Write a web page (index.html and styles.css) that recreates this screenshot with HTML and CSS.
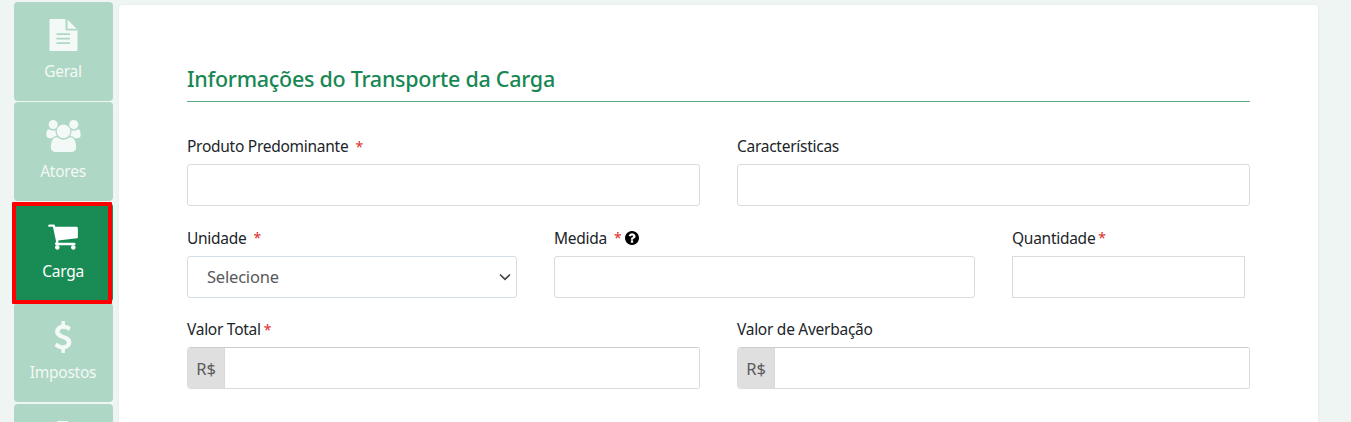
FILE: index.html
```
<!DOCTYPE html>
<html lang="pt-BR">

<head>
  <meta charset="UTF-8">
  <meta name="viewport" content="width=device-width, initial-scale=1.0">
  <title>Carga</title>
  <link rel="stylesheet" href="styles.css">
</head>

<body>
  <!-- Side menu with the form steps -->
  <nav class="menu">
    <a class="step" href="#">
      <svg class="icon" viewBox="0 0 32 32">
        <path d="M3.500 0H18.500v10q0 1.600 1.600 1.600H30.500V31q0 1.200-1.200 1.200H3.700q-1.200 0-1.200-1.200V1q0-1 1-1zM20.500 .6L29.600 9.700H20.500zM9.500 14.200v1.700h13.500v-1.700zM9.500 18.700v1.700h13.500v-1.700zM9.500 23.200v1.700h13.500v-1.700z" fill-rule="evenodd"/>
      </svg>
      <span class="step-name">Geral</span>
    </a>
    <a class="step" href="#">
      <svg class="icon users" viewBox="0 0 1920 1792">
        <path d="M593 896q-162 5-265 128h-134q-82 0-138-40.500t-56-118.500q0-353 124-353 6 0 43.500 21t97.500 42.500 119 21.500q67 0 133-23-5 37-5 66 0 139 81 256zm1071 637q0 120-73 189.500t-194 69.500h-874q-121 0-194-69.500t-73-189.500q0-53 3.500-103.500t14-109 26.500-108.500 43-97.500 62-81 85.500-53.500 111.500-20q10 0 43 21.500t73 48 107 48 135 21.500 135-21.500 107-48 73-48 43-21.500q61 0 111.500 20t85.500 53.500 62 81 43 97.500 26.500 108.500 14 109 3.500 103.500zm-1024-1277q0 106-75 181t-181 75-181-75-75-181 75-181 181-75 181 75 75 181zm704 384q0 159-112.500 271.500t-271.500 112.500-271.500-112.500-112.500-271.500 112.500-271.500 271.500-112.500 271.500 112.500 112.500 271.500zm576 225q0 78-56 118.500t-138 40.500h-134q-103-123-265-128 81-117 81-256 0-29-5-66 66 23 133 23 59 0 119-21.500t97.500-42.500 43.500-21q124 0 124 353zm-128-609q0 106-75 181t-181 75-181-75-75-181 75-181 181-75 181 75 75 181z"/>
      </svg>
      <span class="step-name">Atores</span>
    </a>
    <a class="step active" href="#">
      <svg class="icon" viewBox="0 0 1792 1792">
        <path d="M704 1536q0 52-38 90t-90 38-90-38-38-90 38-90 90-38 90 38 38 90zm896 0q0 52-38 90t-90 38-90-38-38-90 38-90 90-38 90 38 38 90zm128-1088v512q0 24-16.500 42.500t-40.500 21.500l-1044 122q13 60 13 70 0 16-24 64h920q26 0 45 19t19 45-19 45-45 19h-1024q-26 0-45-19t-19-45q0-11 8-31.500t16-36 21.500-40 15.500-29.500l-177-823h-204q-26 0-45-19t-19-45 19-45 45-19h256q16 0 28.500 6.500t19.500 15.500 13 24.500 8 26 5.500 29.500 4.500 26h1201q26 0 45 19t19 45z"/>
      </svg>
      <span class="step-name">Carga</span>
    </a>
    <a class="step" href="#">
      <svg class="icon" viewBox="0 0 1792 1792">
        <path d="M1362 1185q0 153-99.500 263.500t-258.500 136.500v175q0 14-9 23t-23 9h-135q-13 0-22.500-9.500t-9.500-22.500v-175q-66-9-127.500-31t-101.500-44.500-74-48-46.500-37.500-17.500-18q-17-21-2-41l103-135q7-10 23-12 15-2 24 9l2 2q113 99 243 125 37 8 74 8 81 0 142.500-43t61.500-122q0-28-15-53t-33.500-42-58.500-37.500-66-32-80-32.500q-39-16-61.500-25t-61.500-26.500-62.500-31-56.500-35.500-53.500-42.500-43.500-49-35.500-58-21-66.500-8.500-78q0-138 98-242t255-134v-180q0-13 9.500-22.500t22.500-9.500h135q14 0 23 9t9 23v176q57 6 110.500 23t87 33.500 63.500 37.500 39 29 15 14q17 18 5 38l-81 146q-8 15-23 16-14 3-27-7-3-3-14.500-12t-39-26.500-58.500-32-74.500-26-85.500-11.500q-95 0-155 43t-60 111q0 26 8.500 48t29.500 41.500 39.500 33 56 31 60.500 27 70 27.500q53 20 81 31.500t76 35 75.500 42.500 62 50 53 63.500 31.500 76.500 13 94z"/>
      </svg>
      <span class="step-name">Impostos</span>
    </a>
    <a class="step" href="#">
      <svg class="icon" viewBox="0 0 32 32">
        <rect x="9.500" y="0" width="12" height="32" rx="2"/>
      </svg>
    </a>
  </nav>

  <!-- Cargo form -->
  <main class="card">
    <h1 class="title">Informações do Transporte da Carga</h1>

    <form>
      <div class="row half">
        <div class="field">
          <label for="produto">Produto Predominante <span class="required spaced">*</span></label>
          <input class="control" id="produto" type="text">
        </div>
        <div class="field">
          <label for="caracteristicas">Características</label>
          <input class="control" id="caracteristicas" type="text">
        </div>
      </div>

      <div class="row measures">
        <div class="field">
          <label for="unidade">Unidade <span class="required spaced">*</span></label>
          <div class="control select" id="unidade" tabindex="0">
            <span>Selecione</span>
            <svg class="arrow" viewBox="0 0 12 8"><path d="M1 1.500l5 4.800 5-4.800"/></svg>
          </div>
        </div>
        <div class="field">
          <label for="medida">Medida <span class="required spaced">*</span>
            <svg class="help" viewBox="128 128 1536 1536"><path d="M1024 1376v-192q0-14-9-23t-23-9h-192q-14 0-23 9t-9 23v192q0 14 9 23t23 9h192q14 0 23-9t9-23zm256-672q0-88-55.500-163t-138.500-116-170-41q-243 0-371 213-15 24 8 42l132 100q7 6 19 6 16 0 25-12 53-68 86-92 34-24 86-24 48 0 85.500 26t37.500 59q0 38-20 61t-68 45q-63 28-115.500 86.500t-52.500 125.500v36q0 14 9 23t23 9h192q14 0 23-9t9-23q0-19 21.500-49.500t54.500-49.500q32-18 49-28.500t46-35 44.500-48 28-60.500 12.500-81zm384 192q0 209-103 385.500t-279.500 279.500-385.500 103-385.500-103-279.500-279.500-103-385.500 103-385.500 279.500-279.500 385.500-103 385.500 103 279.500 279.500 103 385.500z"/></svg>
          </label>
          <input class="control" id="medida" type="text">
        </div>
        <div class="field">
          <label for="quantidade">Quantidade<span class="required">*</span></label>
          <input class="control square" id="quantidade" type="text">
        </div>
      </div>

      <div class="row half">
        <div class="field">
          <label for="total">Valor Total<span class="required">*</span></label>
          <div class="control money">
            <span class="currency">R$</span>
            <input id="total" type="text">
          </div>
        </div>
        <div class="field">
          <label for="averbacao">Valor de Averbação</label>
          <div class="control money">
            <span class="currency">R$</span>
            <input id="averbacao" type="text">
          </div>
        </div>
      </div>
    </form>
  </main>
</body>

</html>
```
FILE: styles.css
```
* {
  box-sizing: border-box;
}

body {
  margin: 0;
  height: 100vh;
  display: flex;
  gap: 6px;
  background: #eef5f3;
  color: #212529;
  font-family: "Noto Sans", "Open Sans", sans-serif;
  overflow: hidden;
}

/* Side menu */
.menu {
  width: 113px;
  padding: 2px 0 0 14px;
  display: flex;
  flex-direction: column;
  gap: 1.400px;
  flex-shrink: 0;
  overflow: hidden;
}

.step {
  height: 99px;
  padding: 17.400px 1px 0 0;
  display: flex;
  flex-direction: column;
  align-items: center;
  border-radius: 4px;
  background: #afd7c5;
  color: #f3f9f6;
  text-decoration: none;
  flex-shrink: 0;
}

.icon {
  width: 32px;
  height: 32px;
  fill: currentColor;
  flex-shrink: 0;
}

.icon.users {
  width: 35px;
}

.step-name {
  margin-top: 7.300px;
  font-size: 15.500px;
  line-height: 24px;
  letter-spacing: -0.250px;
}

.step.active {
  position: relative;
  background: #198c55;
  color: white;
}

/* Red frame over the current step */
.step.active::after {
  content: "";
  position: absolute;
  top: -1px;
  left: -2px;
  width: 100px;
  height: 102px;
  box-sizing: border-box;
  border: 4px solid #ff0000;
  border-radius: 1px;
}

/* White card holding the form */
.card {
  width: 1199px;
  margin-top: 5px;
  padding: 58px 68px 0;
  border-radius: 3px 3px 0 0;
  background: white;
  box-shadow: 0 0 3px rgba(0, 0, 0, 0.06);
  flex-shrink: 0;
}

.title {
  height: 39px;
  margin: 0 0 32px;
  border-bottom: 1px solid #5fa884;
  color: #198754;
  font-size: 21.500px;
  font-weight: 500;
  line-height: 31px;
  letter-spacing: -0.270px;
}

.row {
  display: grid;
  column-gap: 37px;
  height: 91.700px;
}

.row.half {
  grid-template-columns: 513px 513px;
}

.row.measures {
  grid-template-columns: 330px 421px 233px;
}

.row:last-child {
  height: auto;
}

label {
  height: 24px;
  margin-bottom: 6px;
  display: flex;
  align-items: center;
  font-size: 15.500px;
  letter-spacing: -0.270px;
  white-space: nowrap;
}

.required {
  margin-left: 3px;
  color: #e02b2b;
  font-size: 14px;
}

.required.spaced {
  margin-left: 7px;
}

.help {
  width: 14px;
  height: 14px;
  margin-left: 4px;
  fill: black;
}

/* Inputs */
.control {
  display: flex;
  align-items: center;
  width: 100%;
  height: 42px;
  border: 1px solid #d9dcde;
  border-radius: 3px;
  background: white;
  font-size: 16.500px;
  letter-spacing: -0.200px;
}

.control.square {
  border-radius: 0;
}

.select {
  justify-content: space-between;
  padding: 0 5px 0 19px;
  border-color: #d5dee4;
  color: #58595b;
}

.arrow {
  width: 12px;
  height: 8px;
  fill: none;
  stroke: #444;
  stroke-width: 1.700;
}

.money {
  border-top-color: #cbcecf;
  border-radius: 4px 3px 3px 4px;
  overflow: hidden;
}

.currency {
  width: 37px;
  height: 100%;
  border-right: 1px solid #d5dadd;
  background: #dfdfdf;
  color: #5a5a5a;
  line-height: 41px;
  text-align: center;
}

.money input {
  flex: 1;
  height: 100%;
  border: none;
}
```
